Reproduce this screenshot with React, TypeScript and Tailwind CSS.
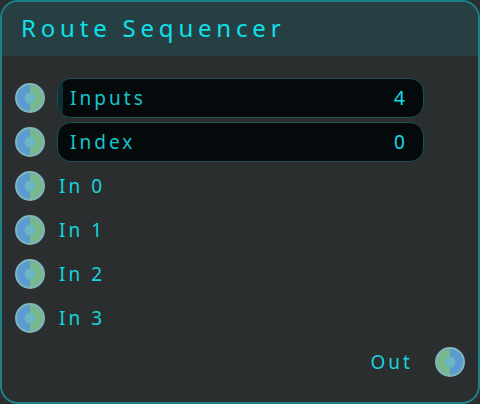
import React from "react"

const Socket = ({ flip = false }: { flip?: boolean }) => (
    <div
        className={`relative w-[30px] h-[30px] shrink-0 rounded-full border-2 border-[#7fb6bd] ${
            flip
                ? "bg-[linear-gradient(90deg,#77b78a_50%,#5a9bd2_50%)]"
                : "bg-[linear-gradient(90deg,#5a9bd2_50%,#77b78a_50%)]"
        }`}
    >
        <div className="absolute left-1/2 top-1/2 w-[11px] h-[11px] -translate-x-1/2 -translate-y-1/2 rounded-full bg-[#6cb6c0]" />
    </div>
)

const Field = ({ label, value, fill = false }: { label: string; value: string; fill?: boolean }) => (
    <div className="relative flex-1 h-[40px] rounded-[14px] border border-[#1b4f53] bg-[#040a0b] overflow-hidden flex items-center justify-between pl-[12px] pr-[15px]">
        {fill && <div className="absolute left-0 top-0 bottom-0 w-[5px] bg-[#0c3033]" />}
        <span className="relative text-[#19c3cc]">{label}</span>
        <span className="relative text-[#13dfe8]">{value}</span>
    </div>
)

const Row = ({ children }: { children: React.ReactNode }) => (
    <div className="h-[44px] flex items-center gap-[12px] pl-[13px] pr-[54px]">
        {children}
    </div>
)

export default function App() {
    return (
        <div className="w-[480px] h-[404px] bg-[#2b2e2f]">
            <div
                className="w-full h-full rounded-[18px] border-2 border-[#1d7f87] bg-[#2b2e2f] overflow-hidden flex flex-col text-[19px] tracking-[0.16em]"
                style={{ fontFamily: "'Noto Sans', 'DejaVu Sans', sans-serif" }}
            >
                {/* HEADER */}
                <div className="h-[54px] shrink-0 bg-[#263f42] flex items-center pl-[19px] pb-[2px]">
                    <span className="text-[24px] text-[#10e0ea] tracking-[0.2em]">Route Sequencer</span>
                </div>

                {/* BODY */}
                <div className="flex flex-col pt-[20px]">
                    <Row>
                        <Socket />
                        <Field label="Inputs" value="4" fill />
                    </Row>
                    <Row>
                        <Socket />
                        <Field label="Index" value="0" />
                    </Row>
                    {["In 0", "In 1", "In 2", "In 3"].map(t => (
                        <Row key={t}>
                            <Socket />
                            <span className="pl-[2px] text-[#17d3dc]">{t}</span>
                        </Row>
                    ))}
                    <div className="h-[44px] flex items-center justify-end gap-[22px] pr-[13px]">
                        <span className="text-[#17d3dc]">Out</span>
                        <Socket flip />
                    </div>
                </div>
            </div>
        </div>
    )
}
